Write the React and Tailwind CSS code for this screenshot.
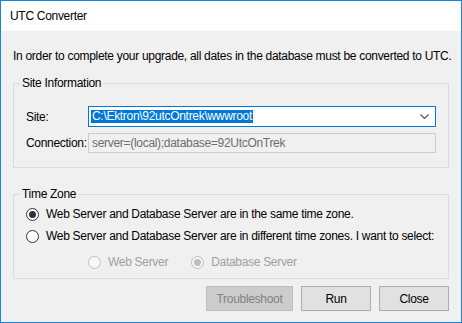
// UTC Converter dialog (WinForms style)
import { useState } from 'react'

const font = { fontFamily: '"Liberation Sans", Arial, sans-serif' }

// Classic Windows 10 radio button
function Radio({ checked, disabled, label, onClick }) {
  return (
    <label className="flex items-center h-[16px] cursor-default" onClick={onClick}>
      <span
        className={`w-[13px] h-[13px] rounded-full border flex items-center justify-center shrink-0 ${
          disabled ? 'border-[#bcbcbc] bg-[#f7f7f7]' : 'border-[#333333] bg-white'
        }`}
      >
        {checked && (
          <span className={`w-[7px] h-[7px] rounded-full ${disabled ? 'bg-[#bcbcbc]' : 'bg-[#333333]'}`} />
        )}
      </span>
      <span className={`ml-[7px] ${disabled ? 'text-[#a0a0a0]' : 'text-black'}`}>{label}</span>
    </label>
  )
}

export default function App() {
  const [sameZone, setSameZone] = useState(true)

  return (
    <div
      className="w-[462px] h-[323px] border border-[#1883d7] bg-[#f0f0f0] flex flex-col text-[12px] leading-[16px] tracking-[-0.3px] whitespace-nowrap text-black"
      style={font}
    >
      {/* ── 標題列 ── */}
      <div className="h-[30px] bg-white flex items-center pl-[9px] shrink-0">UTC Converter</div>

      <div className="px-[12px] pt-[17px] flex flex-col">
        <p>In order to complete your upgrade, all dates in the database must be converted to UTC.</p>

        {/* ── Site Information ── */}
        <fieldset className="mt-[12px] border border-[#dcdcdc] px-[12px] pb-[14px] min-w-0">
          <legend className="px-[2px] ml-[-6px] leading-[14px]">Site Information</legend>

          <div className="mt-[16px] flex items-center h-[21px]">
            <span className="w-[62px]">Site:</span>
            <div className="flex-1 h-[21px] border border-[#0078d7] bg-white flex items-center pl-[2px] pr-[6px]">
              <span className="bg-[#0078d7] text-white leading-[13px] px-px">C:\Ektron\92utcOntrek\wwwroot</span>
              <svg className="ml-auto" width="9" height="6" viewBox="0 0 9 6">
                <path d="M0.5 0.5 L4.5 4.5 L8.5 0.5" fill="none" stroke="#555555" strokeWidth="1.2" />
              </svg>
            </div>
          </div>

          <div className="mt-[6px] flex items-center h-[20px]">
            <span className="w-[62px]">Connection:</span>
            <div className="flex-1 h-[20px] border border-[#cccccc] bg-[#f0f0f0] flex items-center pl-[3px] text-[#6d6d6d]">
              server=(local);database=92UtcOnTrek
            </div>
          </div>
        </fieldset>

        {/* ── Time Zone ── */}
        <fieldset className="mt-[19px] border border-[#dcdcdc] pl-[12px] pb-[8px] min-w-0">
          <legend className="px-[2px] ml-[-6px] leading-[14px]">Time Zone</legend>

          <div className="mt-[5px]">
            <Radio
              checked={sameZone}
              label="Web Server and Database Server are in the same time zone."
              onClick={() => setSameZone(true)}
            />
          </div>
          <div className="mt-[6px]">
            <Radio
              checked={!sameZone}
              label="Web Server and Database Server are in different time zones. I want to select:"
              onClick={() => setSameZone(false)}
            />
          </div>
          <div className="mt-[10px] flex pl-[62px] gap-[23px]">
            <Radio disabled label="Web Server" />
            <Radio disabled checked label="Database Server" />
          </div>
        </fieldset>

        {/* ── 按鈕 ── */}
        <div className="mt-[7px] flex justify-end gap-[8px]">
          <button
            disabled
            className="w-[87px] h-[25px] border border-[#bfbfbf] bg-[#cccccc] text-[#838383]"
          >
            Troubleshoot
          </button>
          <button className="w-[70px] h-[25px] border border-[#adadad] bg-[#e1e1e1]">Run</button>
          <button className="w-[70px] h-[25px] border border-[#adadad] bg-[#e1e1e1]">Close</button>
        </div>
      </div>
    </div>
  )
}
